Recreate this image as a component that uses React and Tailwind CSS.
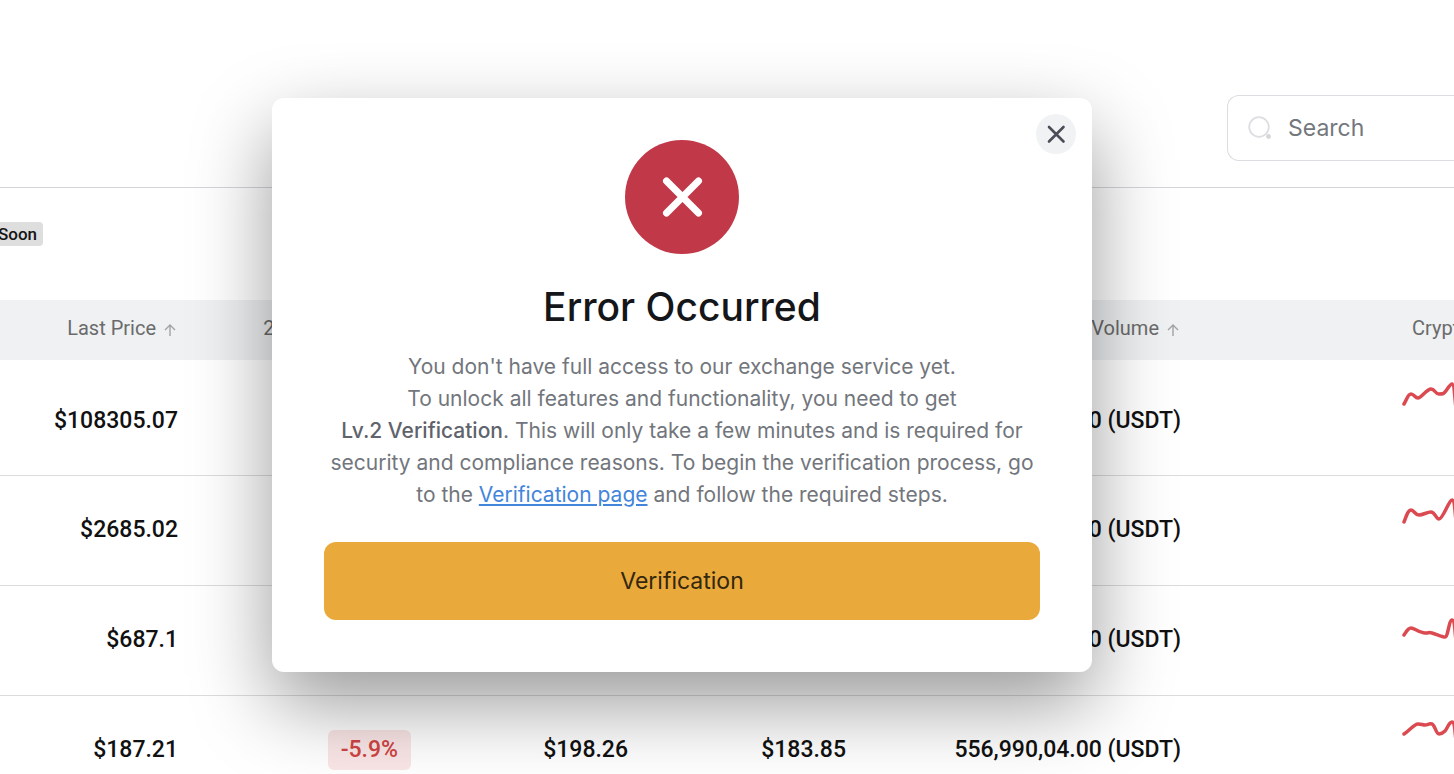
import React, { useState } from 'react';

const rows = [
  {
    price: '$108305.07',
    volume: '00 (USDT)',
    line: 'M2 23C5 18 6 13 9 13S13 17 16 17S25 8 29 8S33 13 37 13S41 13 43 11S48 3 50 3S53 18 54 28',
  },
  {
    price: '$2685.02',
    volume: '00 (USDT)',
    line: 'M2 32C4 27 6 20 9 20S13 25 17 25S25 22 29 22S34 29 37 29C41 29 47 10 50 10S53 25 54 30',
  },
  {
    price: '$687.1',
    volume: '00 (USDT)',
    line: 'M2 35C4 32 6 28 9 28S18 33 23 33S26 32 30 33S40 37 43 37C46 37 47 20 50 20S53 35 54 40',
  },
  {
    price: '$187.21',
    change: '-5.9%',
    high: '$198.26',
    low: '$183.85',
    volume: '556,990,04.00 (USDT)',
    line: 'M2 24C7 21 12 14 16 14S20 15 23 15S27 13 30 14S34 24 37 24S41 23 43 21S47 12 50 12S53 25 54 30',
  },
];

const columns = [
  { id: 'price', name: 'Last Price' },
  { id: 'change', name: '24h % Change' },
  { id: 'high' },
  { id: 'low' },
  { id: 'volume', name: 'Volume' },
];

function ArrowUp() {
  return (
    <svg className="mt-1 h-3 w-3" viewBox="0 0 12 12" fill="none" stroke="#a3a3a3" strokeWidth="1.4">
      <path d="M6 12V1M1 6l5-5 5 5" />
    </svg>
  );
}

function MarketTable() {
  return (
    <table className="w-full table-fixed border-collapse">
      <colgroup>
        <col className="w-[178px]" />
        <col className="w-[233px]" />
        <col className="w-[217px]" />
        <col className="w-[218px]" />
        <col className="w-[335px]" />
        <col />
      </colgroup>
      <thead>
        <tr className="h-[60px] bg-[#eff1f3] text-xl text-[#6b6b6b]">
          {columns.map((column) => (
            <th key={column.id} className="p-0 pb-1 font-normal">
              {column.name && (
                <button type="button" className="flex w-full items-center justify-end gap-2 pr-[2px] whitespace-nowrap">
                  {column.name}
                  <ArrowUp />
                </button>
              )}
            </th>
          ))}
          <th className="overflow-hidden p-0 pb-1 pl-[231px] text-left font-normal whitespace-nowrap">Crypto</th>
        </tr>
      </thead>
      <tbody className="text-right text-[23px] leading-7 font-medium text-[#111]">
        {rows.map((row) => (
          <tr key={row.price} className="h-[110px] border-b border-[#dcdcdc] first:h-[115px] first:*:pt-2">
            <td className="p-0">{row.price}</td>
            <td className="p-0">
              {row.change && (
                <span className="inline-block rounded-md bg-[#d32f2f]/12 px-[13px] py-[6px] align-middle text-[#d04444]">
                  {row.change}
                </span>
              )}
            </td>
            <td className="p-0">{row.high}</td>
            <td className="p-0">{row.low}</td>
            <td className="p-0 whitespace-nowrap">{row.volume}</td>
            <td className="overflow-hidden p-0 pl-[221px]">
              <svg className="h-20 w-14 max-w-none" viewBox="0 0 56 80" fill="none" stroke="#db4a50" strokeWidth="3.5" strokeLinecap="round">
                <path d={row.line} />
              </svg>
            </td>
          </tr>
        ))}
      </tbody>
    </table>
  );
}

function ErrorModal({ onClose }) {
  return (
    <div className="absolute inset-0 flex items-start justify-center pt-[98px] pr-[90px]">
      <div
        role="dialog"
        aria-labelledby="error-title"
        className="relative flex w-full max-w-[820px] flex-col items-center rounded-xl bg-white px-[52px] pt-[42px] pb-[52px] font-['Inter',sans-serif] shadow-[0_32px_80px_rgba(0,0,0,0.4)]"
      >
        <button
          type="button"
          aria-label="Close"
          onClick={onClose}
          className="absolute top-4 right-4 flex h-10 w-10 items-center justify-center rounded-full bg-[#f0f2f4]"
        >
          <svg className="h-5 w-5" viewBox="0 0 20 20" fill="none" stroke="#4a4d57" strokeWidth="2.6" strokeLinecap="round">
            <path d="M3 3l14.5 14.5M17.5 3L3 17.5" />
          </svg>
        </button>

        <svg className="h-[114px] w-[114px]" viewBox="0 0 114 114" fill="none">
          <circle cx="57" cy="57" r="57" fill="#c13848" />
          <path d="M41.5 41l32 32M73.5 41l-32 32" stroke="#fff" strokeWidth="7" strokeLinecap="round" />
        </svg>

        <h2 id="error-title" className="mt-7 text-[39px] leading-[50px] font-medium text-[#151619]">
          Error Occurred
        </h2>

        <p className="mt-[19px] text-center text-[21px] leading-8 text-[#72767c]">
          You don't have full access to our exchange service yet.
          <br />
          To unlock all features and functionality, you need to get
          <br />
          <b className="font-medium text-[#5f636b]">Lv.2 Verification</b>. This will only take a few minutes and is required for
          <br />
          security and compliance reasons. To begin the verification process, go
          <br />
          to the{' '}
          <a href="#verification" className="text-[#4285db] underline">
            Verification page
          </a>{' '}
          and follow the required steps.
        </p>

        <button type="button" className="mt-[31px] h-[78px] w-full rounded-xl bg-[#eaa93b] text-[23px] text-[#33270e]">
          Verification
        </button>
      </div>
    </div>
  );
}

export default function App() {
  const [open, setOpen] = useState(true);

  return (
    <div className="relative h-screen overflow-hidden bg-white font-['Roboto',sans-serif]">
      <header className="flex justify-end border-b border-[#d4d5d9] pt-[95px] pb-[26px]">
        <label className="flex h-[66px] w-[227px] items-center gap-4 rounded-l-xl border border-r-0 border-[#dcdde0] pl-5">
          <svg className="h-6 w-6 shrink-0" viewBox="0 0 24 24" fill="none">
            <circle cx="11" cy="11" r="9.8" stroke="#dddee2" strokeWidth="1.8" />
            <circle cx="20.5" cy="20.5" r="2.4" fill="#d5d6da" />
          </svg>
          <input
            type="text"
            aria-label="Search"
            placeholder="Search"
            className="w-full min-w-0 font-['Inter',sans-serif] text-[23px] outline-none placeholder:text-[#74777c]"
          />
        </label>
      </header>

      <div className="flex h-28 pt-[34px]">
        <span className="-ml-2 h-6 rounded bg-[#dedede] px-[6px] text-[17px] leading-6 font-medium text-[#151515]">Soon</span>
      </div>

      <MarketTable />

      {open && <ErrorModal onClose={() => setOpen(false)} />}
    </div>
  );
}
